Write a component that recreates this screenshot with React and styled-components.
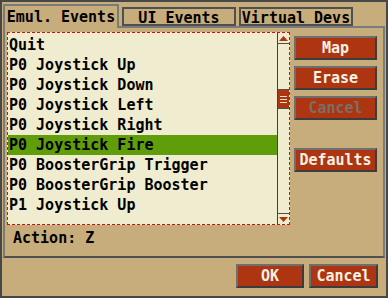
import React from 'react'
import styled, { createGlobalStyle } from 'styled-components'

const GlobalStyle = createGlobalStyle`
  html, body {
    margin: 0;
    padding: 0;
    background: #c8ad7c;
  }
  body {
    font-family: 'DejaVu Sans Mono', 'Liberation Mono', monospace;
    font-weight: bold;
    font-size: 15px;
  }
`

const Dialog = styled.div`
  width: 388px;
  height: 298px;
  box-sizing: border-box;
  border: 2px solid #474747;
  background: #c8ad7c;
  display: flex;
  flex-direction: column;
  padding: 2px 1px 0 1px;
`

const TabBar = styled.div`
  display: flex;
  align-items: flex-end;
  height: 22px;
  gap: 3px;
`

const Tab = styled.div`
  position: relative;
  box-sizing: border-box;
  width: ${p => (p.$active ? 116 : 114)}px;
  height: ${p => (p.$active ? 24 : 19)}px;
  margin-bottom: ${p => (p.$active ? -2 : 0)}px;
  z-index: ${p => (p.$active ? 2 : 0)};
  background: #c8ad7c;
  border: 2px solid ${p => (p.$active ? '#7b7b7b' : '#505050')};
  border-bottom: ${p => (p.$active ? 'none' : '2px solid #505050')};
  color: #000;
  padding-top: ${p => (p.$active ? 3 : 1)}px;
  text-align: center;
  line-height: 16px;
  white-space: nowrap;
`

const Panel = styled.div`
  box-sizing: border-box;
  height: 232px;
  border: 2px solid #7b7b7b;
  border-bottom-color: #505050;
  display: flex;
  flex-direction: column;
  padding: 4px 0 0 2px;
`

const Row = styled.div`
  display: flex;
  align-items: flex-start;
`

const List = styled.div`
  box-sizing: border-box;
  width: 283px;
  height: 193px;
  border: 1px dashed #d01010;
  background: #f0eccf;
  display: flex;
`

const Items = styled.div`
  flex: 1;
  padding-top: 2px;
`

const Item = styled.div`
  height: 20px;
  line-height: 20px;
  padding-left: 1px;
  color: #000;
  background: ${p => (p.$selected ? '#5f9d0a' : 'transparent')};
  white-space: nowrap;
`

const ScrollBar = styled.div`
  width: 11px;
  border-left: 1px solid #404040;
  display: flex;
  flex-direction: column;
`

const ArrowBox = styled.div`
  height: 10px;
  display: flex;
  align-items: center;
  justify-content: center;
  border-${p => (p.$down ? 'top' : 'bottom')}: 1px solid #505050;
`

const Track = styled.div`
  flex: 1;
  position: relative;
`

const Thumb = styled.div`
  position: absolute;
  left: 0;
  right: 0;
  box-sizing: border-box;
  height: 20px;
  background: #ad3511;
  border-top: 1px solid #505050;
  border-bottom: 1px solid #505050;
  display: flex;
  flex-direction: column;
  justify-content: center;
  align-items: center;
  gap: 2px;
`

const Grip = styled.div`
  width: 7px;
  height: 1px;
  background: #f0e0c0;
`

const Side = styled.div`
  display: flex;
  flex-direction: column;
  margin-left: 4px;
  padding-top: 4px;
`

const Button = styled.div`
  box-sizing: border-box;
  width: ${p => p.$w || 83}px;
  height: 24px;
  margin-bottom: ${p => p.$mb || 0}px;
  background: #ad3511;
  border: 2px solid #3c3c3c;
  border-top-color: #6e6e6e;
  border-left-color: #6e6e6e;
  color: ${p => (p.$disabled ? '#7d6d64' : '#f6f2e2')};
  display: flex;
  align-items: center;
  justify-content: center;
  line-height: 20px;
`

const Action = styled.div`
  color: #000;
  padding: 4px 0 0 6px;
  line-height: 18px;
`

const Footer = styled.div`
  display: flex;
  justify-content: flex-end;
  gap: 5px;
  padding: 6px 7px 0 0;
`

function Arrow ({ down }) {
  return (
    <svg width='9' height='5' viewBox='0 0 9 5'>
      <polygon points={down ? '0,0 9,0 4.5,5' : '0,5 9,5 4.5,0'} fill='#ad3511' />
    </svg>
  )
}

const items = [
  'Quit',
  'P0 Joystick Up',
  'P0 Joystick Down',
  'P0 Joystick Left',
  'P0 Joystick Right',
  'P0 Joystick Fire',
  'P0 BoosterGrip Trigger',
  'P0 BoosterGrip Booster',
  'P1 Joystick Up'
]

export default function App () {
  return (
    <>
      <GlobalStyle />
      <Dialog>
        <TabBar>
          <Tab $active>Emul. Events</Tab>
          <Tab>UI Events</Tab>
          <Tab>Virtual Devs</Tab>
        </TabBar>
        <Panel>
          <Row>
            <List>
              <Items>
                {items.map((it, i) => (
                  <Item key={it} $selected={i === 5}>{it}</Item>
                ))}
              </Items>
              <ScrollBar>
                <ArrowBox><Arrow /></ArrowBox>
                <Track>
                  <Thumb style={{ top: 45 }}>
                    <Grip /><Grip /><Grip />
                  </Thumb>
                </Track>
                <ArrowBox $down><Arrow down /></ArrowBox>
              </ScrollBar>
            </List>
            <Side>
              <Button $mb={6}>Map</Button>
              <Button $mb={6}>Erase</Button>
              <Button $mb={28} $disabled>Cancel</Button>
              <Button>Defaults</Button>
            </Side>
          </Row>
          <Action>Action: Z</Action>
        </Panel>
        <Footer>
          <Button $w={68}>OK</Button>
          <Button $w={69}>Cancel</Button>
        </Footer>
      </Dialog>
    </>
  )
}
